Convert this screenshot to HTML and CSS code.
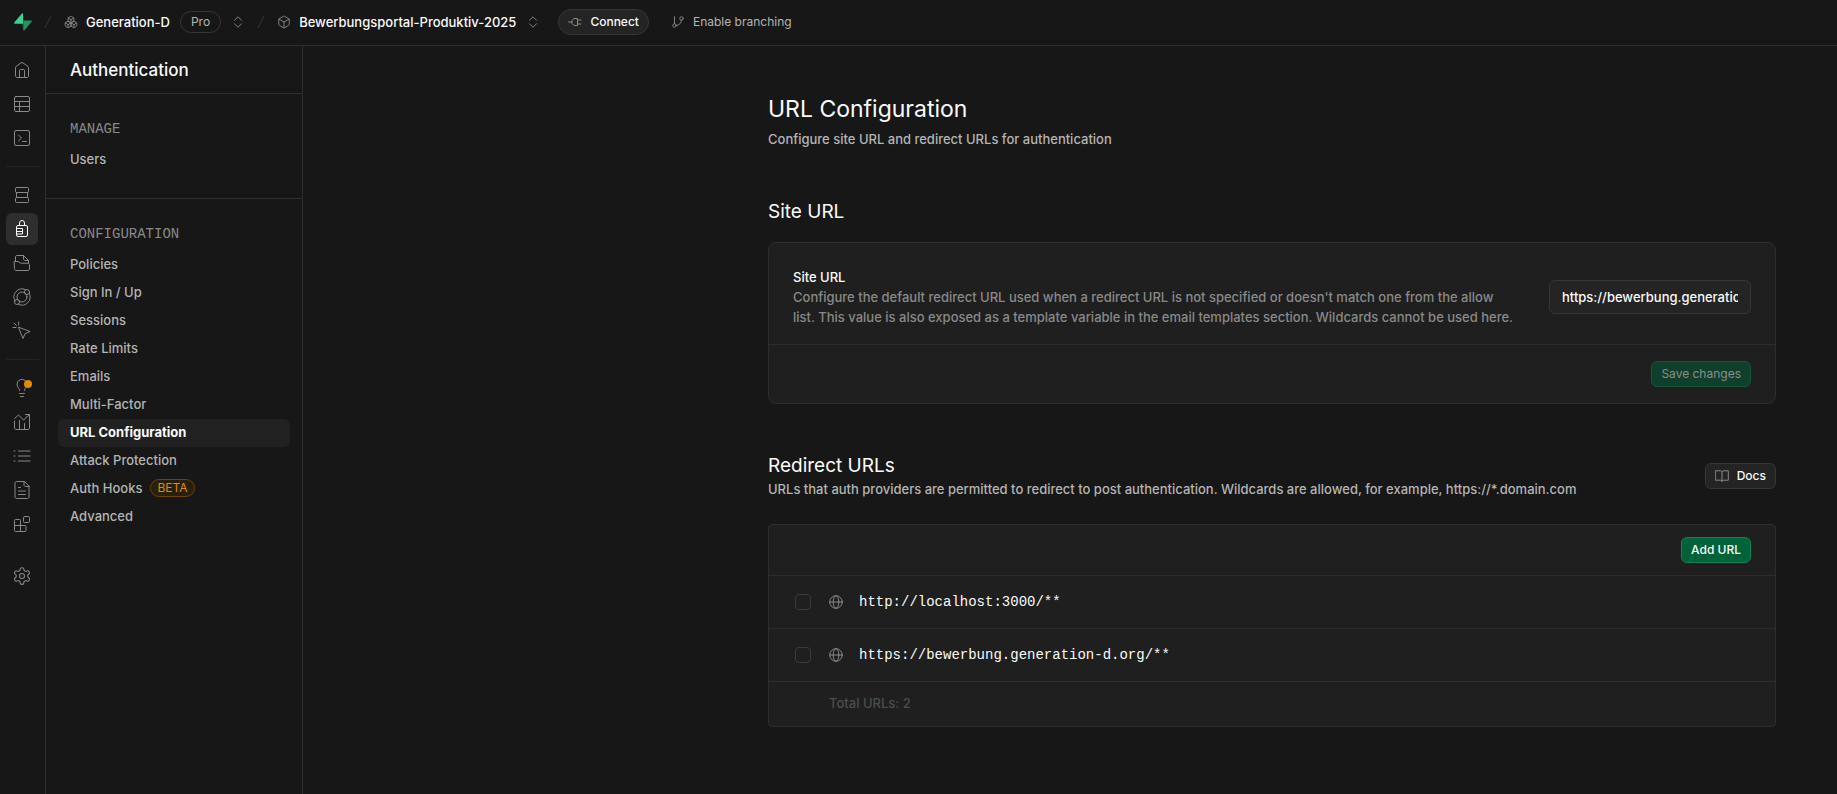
FILE: index.html
```
<!DOCTYPE html>
<html lang="en">
<head>
<meta charset="utf-8">
<title>URL Configuration</title>
<meta name="viewport" content="width=device-width, initial-scale=1">
<link rel="stylesheet" href="styles.css">
</head>
<body>
<div class="app">
  <header class="topbar">
    <a class="logo" href="#" aria-label="Home">
      <svg width="18" height="18" viewBox="0 0 18 18"><path d="M9.2.9v6.5h7.7c1 0 1.3.7.8 1.400L10.500 17.300c-.5.6-1.200.3-1.200-.4V11z" fill="#249361"/><path d="M8.800 16.900V10.800H1.100c-1 0-1.300-.7-.8-1.400L7.900.5C8.400-.1 9.100.2 9.100.9V10.800z" fill="#3ecf8e"/></svg>
    </a>
    <svg class="slash" width="8" height="14" viewBox="0 0 8 14"><path d="M7 1L1 13"/></svg>
    <a class="crumb" href="#">
      <svg class="icon" width="14" height="14" viewBox="0 0 24 24"><path d="M2.970 12.920A2 2 0 0 0 2 14.630v3.240a2 2 0 0 0 .97 1.710l3 1.800a2 2 0 0 0 2.060 0L12 19v-5.500l-5-3-4.030 2.420Z"/><path d="m7 16.500-4.740-2.850M7 16.500l5-3M7 16.500v5.170"/><path d="M12 13.500V19l3.970 2.380a2 2 0 0 0 2.060 0l3-1.800a2 2 0 0 0 .97-1.710v-3.240a2 2 0 0 0-.97-1.710L17 10.500l-5 3Z"/><path d="m17 16.500-5-3M17 16.500l4.740-2.850M17 16.500v5.170"/><path d="M7.970 4.420A2 2 0 0 0 7 6.130v4.370l5 3 5-3V6.130a2 2 0 0 0-.97-1.710l-3-1.800a2 2 0 0 0-2.060 0l-3 1.800Z"/><path d="M12 8 7.260 5.150M12 8l4.740-2.850M12 13.500V8"/></svg>
      <span>Generation-D</span>
      <span class="plan">Pro</span>
    </a>
    <button class="switcher" type="button" aria-label="Switch organization"><svg class="icon" width="14" height="14" viewBox="0 0 24 24"><path d="m6 9 6-6 6 6M6 15l6 6 6-6"/></svg></button>
    <svg class="slash" width="8" height="14" viewBox="0 0 8 14"><path d="M7 1L1 13"/></svg>
    <a class="crumb" href="#">
      <svg class="icon" width="14" height="14" viewBox="0 0 24 24"><path d="M21 8a2 2 0 0 0-1-1.730l-7-4a2 2 0 0 0-2 0l-7 4A2 2 0 0 0 3 8v8a2 2 0 0 0 1 1.730l7 4a2 2 0 0 0 2 0l7-4A2 2 0 0 0 21 16Z"/><path d="m3.300 7 8.700 5 8.700-5M12 22V12"/></svg>
      <span>Bewerbungsportal-Produktiv-2025</span>
    </a>
    <button class="switcher" type="button" aria-label="Switch project"><svg class="icon" width="14" height="14" viewBox="0 0 24 24"><path d="m6 9 6-6 6 6M6 15l6 6 6-6"/></svg></button>
    <button class="connect" type="button"><svg class="icon" width="14" height="14" viewBox="0 0 14 14"><path d="M.5 7H4M4 5.500L6 3.500h3.500v7H6L4 8.500zM9.500 5H13M9.500 9H13"/></svg>Connect</button>
    <button class="branching" type="button"><svg class="icon" width="14" height="14" viewBox="0 0 24 24"><path d="M6 3v12"/><circle cx="18" cy="6" r="3"/><circle cx="6" cy="18" r="3"/><path d="M18 9a9 9 0 0 1-9 9"/></svg>Enable branching</button>
  </header>

  <nav class="rail" aria-label="Product">
    <div class="rail-group">
      <a href="#" aria-label="Project overview"><svg class="icon" width="20" height="20" viewBox="0 0 20 20"><path d="M3.500 7.700c0-.5.300-1 .7-1.300l4.800-3.500c.6-.4 1.400-.4 2 0l4.800 3.500c.4.3.7.8.7 1.300V16c0 .8-.7 1.500-1.500 1.500H5c-.8 0-1.500-.7-1.500-1.500zM7.500 17.500V10.500a1 1 0 0 1 1-1h3a1 1 0 0 1 1 1v7"/></svg></a>
      <a href="#" aria-label="Table editor"><svg class="icon" width="20" height="20" viewBox="0 0 20 20"><rect x="2.500" y="2.500" width="15" height="15" rx="1.500"/><path d="M2.500 7.500h15M2.500 12.500h15M7.500 7.500v10"/></svg></a>
      <a href="#" aria-label="SQL editor"><svg class="icon" width="20" height="20" viewBox="0 0 20 20"><rect x="2.500" y="2.500" width="15" height="15" rx="1.500"/><path d="M6.500 7l3 3-3 3M10.500 13.500h4"/></svg></a>
    </div>
    <hr>
    <div class="rail-group">
      <a href="#" aria-label="Database"><svg class="icon" width="20" height="20" viewBox="0 0 20 20"><rect x="3.500" y="2.500" width="13" height="5" rx="1"/><path d="M4.500 7.500v5M15.500 7.500v5"/><rect x="3.500" y="12.500" width="13" height="5" rx="1"/></svg></a>
      <a class="active" href="#" aria-label="Authentication"><svg class="icon" width="20" height="20" viewBox="0 0 20 20"><rect x="4.500" y="6.500" width="11" height="11" rx="1.500"/><path d="M7.500 6.500V4a2.500 2.500 0 0 1 5 0v2.500M4.500 9.500H10.500v5.500H4.500M4.500 12.500H10.500"/></svg></a>
      <a href="#" aria-label="Storage"><svg class="icon" width="20" height="20" viewBox="0 0 20 20"><path d="M3.500 8V4c0-.8.700-1.500 1.500-1.500h6.500l5 5V10M11.500 2.500v3.500c0 .8.700 1.500 1.500 1.500h3.500"/><path d="M2.500 8.500H6l2.500 1.700H16c.8 0 1.500.6 1.500 1.400V16c0 .8-.7 1.500-1.500 1.500H4c-.8 0-1.500-.7-1.500-1.500z"/></svg></a>
      <a href="#" aria-label="Edge functions"><svg class="icon" width="20" height="20" viewBox="0 0 20 20"><circle cx="10" cy="10" r="5"/><circle cx="15" cy="5" r="2.500"/><circle cx="5" cy="15" r="2.500"/><path d="M13.300 2.500A8.200 8.200 0 0 0 2.900 14M17.200 6.200A8.200 8.200 0 0 1 6.700 17.500"/></svg></a>
      <a href="#" aria-label="Realtime"><svg class="icon" width="20" height="20" viewBox="0 0 20 20"><path d="M6.500 6.500l4.500 11 2-4.800 4.800-2zM6.700 1v3M1 6.500h3M2 2l2.500 2.500"/></svg></a>
    </div>
    <hr>
    <div class="rail-group">
      <a class="notify" href="#" aria-label="Advisors"><svg class="icon" width="20" height="20" viewBox="0 0 20 20"><path d="M7.500 12.500c0-1.500-.7-2.200-1.400-3A5 5 0 1 1 15 6.500c0 1.200-.4 2.100-1.100 3-.7.800-1.400 1.500-1.400 3M7.500 15.500h5M8.500 18.500h3"/></svg></a>
      <a href="#" aria-label="Reports"><svg class="icon" width="20" height="20" viewBox="0 0 20 20"><path d="M2.500 9v7c0 .8.700 1.500 1.500 1.500h12c.8 0 1.500-.7 1.500-1.500V7M7.500 8.500v9M12.500 11.500v6M2.500 6.500L6.500 3l5 5L17.500 2.500M13.500 2.500h4v4"/></svg></a>
      <a href="#" aria-label="Logs"><svg class="icon" width="20" height="20" viewBox="0 0 20 20"><path d="M6.500 5H18M6.500 10H18M6.500 15H18M2 5h1M2 10h1M2 15h1"/></svg></a>
      <a href="#" aria-label="API docs"><svg class="icon" width="20" height="20" viewBox="0 0 20 20"><path d="M12 1.500H4.500c-.8 0-1.500.7-1.500 1.500v14c0 .8.700 1.500 1.500 1.500h11c.8 0 1.500-.7 1.500-1.500V6.500zM12 1.500v3.500c0 .8.700 1.500 1.500 1.500h3.500M6.500 7.500h2M6.500 11h7M6.500 14.500h7"/></svg></a>
      <a href="#" aria-label="Integrations"><svg class="icon" width="20" height="20" viewBox="0 0 20 20"><rect x="11.500" y="2.500" width="6" height="6" rx="1"/><path d="M8.500 17.500V6.500a1 1 0 0 0-1-1h-4a1 1 0 0 0-1 1v10a1 1 0 0 0 1 1h9.500a1 1 0 0 0 1-1v-4a1 1 0 0 0-1-1H2.500"/></svg></a>
    </div>
    <div class="rail-group settings">
      <a href="#" aria-label="Project settings"><svg class="icon gear" width="20" height="20" viewBox="0 0 24 24"><path d="M12.220 2h-.44a2 2 0 0 0-2 2v.18a2 2 0 0 1-1 1.730l-.43.25a2 2 0 0 1-2 0l-.15-.08a2 2 0 0 0-2.730.73l-.22.38a2 2 0 0 0 .73 2.730l.15.1a2 2 0 0 1 1 1.720v.51a2 2 0 0 1-1 1.740l-.15.09a2 2 0 0 0-.73 2.730l.22.38a2 2 0 0 0 2.730.73l.15-.08a2 2 0 0 1 2 0l.43.25a2 2 0 0 1 1 1.730V20a2 2 0 0 0 2 2h.44a2 2 0 0 0 2-2v-.18a2 2 0 0 1 1-1.730l.43-.25a2 2 0 0 1 2 0l.15.08a2 2 0 0 0 2.730-.73l.22-.39a2 2 0 0 0-.73-2.730l-.15-.08a2 2 0 0 1-1-1.740v-.5a2 2 0 0 1 1-1.740l.15-.09a2 2 0 0 0 .73-2.730l-.22-.38a2 2 0 0 0-2.730-.73l-.15.08a2 2 0 0 1-2 0l-.43-.25a2 2 0 0 1-1-1.730V4a2 2 0 0 0-2-2z"/><circle cx="12" cy="12" r="3"/></svg></a>
    </div>
  </nav>

  <aside class="sidebar">
    <div class="sidebar-title">Authentication</div>
    <section class="menu">
      <h2>MANAGE</h2>
      <a href="#">Users</a>
    </section>
    <section class="menu">
      <h2>CONFIGURATION</h2>
      <a href="#">Policies</a>
      <a href="#">Sign In / Up</a>
      <a href="#">Sessions</a>
      <a href="#">Rate Limits</a>
      <a href="#">Emails</a>
      <a href="#">Multi-Factor</a>
      <a class="current" href="#" aria-current="page">URL Configuration</a>
      <a href="#">Attack Protection</a>
      <a href="#">Auth Hooks <span class="beta">BETA</span></a>
      <a href="#">Advanced</a>
    </section>
  </aside>

  <main class="main">
    <div class="content">
      <h1>URL Configuration</h1>
      <p class="lead">Configure site URL and redirect URLs for authentication</p>

      <section class="block">
        <h2>Site URL</h2>
        <form class="card">
          <div class="field">
            <div class="field-text">
              <label for="site-url">Site URL</label>
              <p>Configure the default redirect URL used when a redirect URL is not specified or doesn't match one from the allow<br> list. This value is also exposed as a template variable in the email templates section. Wildcards cannot be used here.</p>
            </div>
            <input id="site-url" type="text" value="https://bewerbung.generation-d.org">
          </div>
          <div class="card-footer"><button class="btn primary" type="submit" disabled>Save changes</button></div>
        </form>
      </section>

      <section class="block">
        <div class="block-head">
          <div>
            <h2>Redirect URLs</h2>
            <p>URLs that auth providers are permitted to redirect to post authentication. Wildcards are allowed, for example, https://*.domain.com</p>
          </div>
          <a class="btn" href="#"><svg class="icon" width="14" height="14" viewBox="0 0 14 14"><path d="M7 3v9.500M.7 1.800h4.600c1 0 1.700.5 1.700 1.200 0-.7.700-1.200 1.700-1.200h4.600v9.400H8.700c-1 0-1.700.5-1.700 1.200 0-.7-.7-1.200-1.700-1.200H.7z"/></svg>Docs</a>
        </div>
        <div class="card url-list">
          <div class="list-head"><button class="btn primary" type="button">Add URL</button></div>
          <div class="row">
            <input id="url-1" type="checkbox">
            <svg class="icon" width="14" height="14" viewBox="0 0 14 14"><circle cx="7" cy="7" r="6.300"/><ellipse cx="7" cy="7" rx="2.800" ry="6.300"/><path d="M.7 7h12.600"/></svg>
            <label for="url-1">http://localhost:3000/**</label>
          </div>
          <div class="row">
            <input id="url-2" type="checkbox">
            <svg class="icon" width="14" height="14" viewBox="0 0 14 14"><circle cx="7" cy="7" r="6.300"/><ellipse cx="7" cy="7" rx="2.800" ry="6.300"/><path d="M.7 7h12.600"/></svg>
            <label for="url-2">https://bewerbung.generation-d.org/**</label>
          </div>
          <div class="total">Total URLs: 2</div>
        </div>
      </section>
    </div>
  </main>
</div>
</body>
</html>
```
FILE: styles.css
```
:root {
  --bg: #171717;
  --surface: #1f1f1f;
  --control: #242424;
  --line: #2e2e2e;
  --line-strong: #363636;
  --text: #fafafa;
  --text-light: #b4b4b4;
  --text-lighter: #898989;
  --text-muted: #4d4d4d;
  --sans: Inter, "Liberation Sans", sans-serif;
  --mono: "Liberation Mono", monospace;
}

* { box-sizing: border-box; }

body {
  margin: 0;
  background: var(--bg);
  color: var(--text);
  font: 500 13px/20px var(--sans);
}

h1, h2, p { margin: 0; }
a { color: inherit; text-decoration: none; }
button, input { font: inherit; color: inherit; }
button { cursor: pointer; }

.icon {
  flex: none;
  fill: none;
  stroke: currentColor;
  stroke-linecap: round;
  stroke-linejoin: round;
}
.icon[viewBox="0 0 24 24"] { stroke-width: 1.6; }
.icon.gear { stroke-width: 1.3; }

.app {
  display: grid;
  grid-template-columns: 46px 257px minmax(0, 1fr);
  grid-template-rows: 46px 1fr;
  min-height: 100vh;
}

/* Top bar */
.topbar {
  grid-column: 1 / -1;
  display: flex;
  align-items: center;
  padding: 0 14px 1px;
  border-bottom: 1px solid var(--line);
}
.logo { display: flex; }
.slash { margin: 0 12px; fill: none; stroke: var(--line-strong); }
.crumb {
  display: flex;
  align-items: center;
  gap: 8px;
}
.crumb .icon, .switcher, .connect .icon, .branching .icon, .btn .icon { color: var(--text-lighter); }
.plan {
  padding: 0 10px;
  margin-left: 2px;
  border: 1px solid var(--line-strong);
  border-radius: 11px;
  color: var(--text-light);
  font-size: 12px;
  font-weight: 400;
}
.switcher {
  display: flex;
  padding: 0;
  margin: 0 0 0 10px;
  border: 0;
  background: none;
}
.connect, .branching {
  display: flex;
  align-items: center;
  gap: 8px;
  height: 26px;
  padding: 0 9px;
  border: 1px solid transparent;
  border-radius: 13px;
  background: none;
  font-size: 12px;
}
.connect {
  margin: 0 12px 0 18px;
  border-color: var(--line-strong);
  background: var(--control);
}
.branching { color: var(--text-light); font-weight: 400; }

/* Icon rail */
.rail {
  padding: 8px 6px;
  border-right: 1px solid var(--line);
  color: var(--text-lighter);
}
.rail-group { display: grid; gap: 2px; }
.rail-group a {
  position: relative;
  display: grid;
  place-items: center;
  width: 32px;
  height: 32px;
  border-radius: 6px;
}
.rail-group .active { background: #2e2e2e; color: var(--text); }
.rail hr {
  margin: 12px 0;
  border: 0;
  border-top: 1px solid #242424;
}
.notify::after {
  content: "";
  position: absolute;
  top: 8px;
  right: 6px;
  width: 8px;
  height: 8px;
  border-radius: 50%;
  background: #db8e00;
}
.settings { margin-top: 20px; }

/* Section menu */
.sidebar { border-right: 1px solid var(--line); }
.sidebar-title {
  padding: 12px 24px 11px;
  border-bottom: 1px solid var(--line);
  font-size: 17px;
  line-height: 24px;
}
.menu { padding: 25px 12px 24px; }
.menu + .menu { border-top: 1px solid var(--line); }
.menu h2 {
  padding: 0 12px;
  margin-bottom: 7px;
  color: var(--text-lighter);
  font: 14px/20px var(--mono);
}
.menu a {
  display: flex;
  align-items: center;
  gap: 8px;
  height: 28px;
  padding: 0 12px 2px;
  border-radius: 6px;
  color: var(--text-light);
}
.menu .current {
  background: #212121;
  color: var(--text);
  font-weight: 700;
}
.beta {
  padding: 0 6px;
  border: 1px solid #6a4300;
  border-radius: 9px;
  background: #291f0c;
  color: #db8e00;
  font-size: 12px;
  font-weight: 400;
  line-height: 16px;
}

/* Page content */
.main { padding: 47px 61px 48px; }
.content { max-width: 1008px; margin-left: auto; }
h1 { font-size: 23px; font-weight: 400; line-height: 32px; }
.lead { margin-top: 4px; color: var(--text-light); }
.block { margin-top: 49px; }
.lead + .block { margin-top: 50px; }
.block h2 { font-size: 19px; font-weight: 400; line-height: 26px; }
.block .card { margin-top: 17px; }
.block-head {
  display: flex;
  align-items: center;
  justify-content: space-between;
  gap: 24px;
  color: var(--text-light);
}
.block-head h2 { color: var(--text); }
.card {
  border: 1px solid var(--line);
  border-radius: 8px;
  background: var(--surface);
}
.field {
  display: flex;
  align-items: center;
  gap: 28px;
  padding: 24px 24px 17px;
}
.field-text { flex: 1; }
.field-text label { display: block; }
.field-text p { color: var(--text-lighter); }
.field input {
  flex: none;
  width: 202px;
  height: 34px;
  padding: 0 12px;
  border: 1px solid var(--line-strong);
  border-radius: 6px;
  background: var(--control);
  outline: 0;
}
.card-footer, .list-head {
  display: flex;
  justify-content: flex-end;
  padding: 16px 24px;
  border-top: 1px solid var(--line);
}
.btn {
  display: flex;
  align-items: center;
  gap: 8px;
  height: 26px;
  padding: 0 9px;
  border: 1px solid var(--line-strong);
  border-radius: 6px;
  background: var(--control);
  color: var(--text);
  font-size: 12px;
}
.btn.primary { border-color: #128353; background: #006239; }
.btn.primary:disabled {
  border-color: #15553a;
  background: #10402b;
  color: #878f8b;
  font-weight: 400;
}
.block .url-list { margin-top: 25px; border-radius: 4px; }
.list-head { padding: 12px 24px; border-top: 0; }
.row {
  display: flex;
  align-items: center;
  height: 53px;
  padding: 0 26px;
  border-top: 1px solid var(--line);
}
.row input {
  appearance: none;
  width: 16px;
  height: 16px;
  margin: 0 18px 0 0;
  border: 1px solid #3b3b3b;
  border-radius: 4px;
}
.row .icon { color: var(--text-lighter); }
.row label { margin-left: 16px; font: 14px/20px var(--mono); }
.total {
  padding: 11px 60px 13px;
  border-top: 1px solid var(--line);
  color: var(--text-muted);
}
```
